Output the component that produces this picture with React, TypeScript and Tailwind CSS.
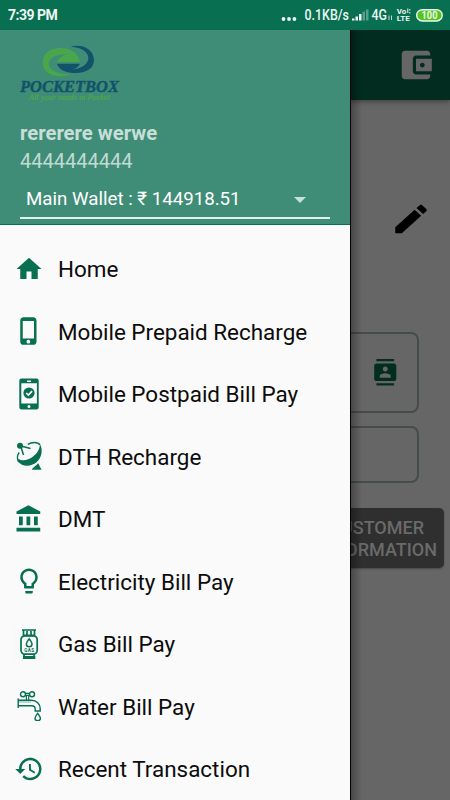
import React from "react";

const GREEN = "#086f50";

type IconProps = { d: string; className?: string; stretch?: boolean };

function Icon({ d, className = "size-[30px] shrink-0 fill-[#086f50]", stretch }: IconProps) {
  return (
    <svg viewBox="0 0 24 24" className={className} preserveAspectRatio={stretch ? "none" : undefined}>
      <path d={d} />
    </svg>
  );
}

const paths = {
  home: "M10 20v-6h4v6h5v-8h3L12 3 2 12h3v8z",
  phone:
    "M15.5 1h-8C6.12 1 5 2.12 5 3.5v17C5 21.88 6.12 23 7.5 23h8c1.38 0 2.5-1.12 2.5-2.5v-17C18 2.12 16.88 1 15.5 1zm-4 21c-.83 0-1.5-.67-1.5-1.5s.67-1.5 1.5-1.5 1.5.67 1.5 1.5-.67 1.5-1.5 1.5zm4.5-4H7V4h9v14z",
  bank: "M4 10v7h3v-7H4zm6 0v7h3v-7h-3zM2 22h19v-3H2v3zm14-12v7h3v-7h-3zm-4.5-9L2 6v2h19V6l-9.5-5z",
  bulb: "M9 21c0 .55.45 1 1 1h4c.55 0 1-.45 1-1v-1H9v1zm3-19C8.14 2 5 5.14 5 9c0 2.38 1.19 4.47 3 5.74V17c0 .55.45 1 1 1h6c.55 0 1-.45 1-1v-2.26c1.81-1.27 3-3.36 3-5.74 0-3.86-3.14-7-7-7zm2.85 11.1l-.85.6V16h-4v-2.3l-.85-.6A4.997 4.997 0 0 1 7 9c0-2.76 2.24-5 5-5s5 2.24 5 5c0 1.63-.8 3.16-2.15 4.1z",
  history:
    "M13 3c-4.97 0-9 4.03-9 9H1l3.89 3.89.07.14L9 12H6c0-3.87 3.13-7 7-7s7 3.13 7 7-3.13 7-7 7c-1.93 0-3.68-.79-4.94-2.06l-1.42 1.42C8.27 19.99 10.51 21 13 21c4.97 0 9-4.03 9-9s-4.03-9-9-9zm-1 5v5l4.28 2.54.72-1.21-3.5-2.08V8H12z",
  wallet:
    "M21 18v1c0 1.1-.9 2-2 2H5c-1.11 0-2-.9-2-2V5c0-1.1.89-2 2-2h14c1.1 0 2 .9 2 2v1h-9c-1.11 0-2 .9-2 2v8c0 1.1.89 2 2 2h9zm-9-2h10V8H12v8zm4-2.5c-.83 0-1.5-.67-1.5-1.5s.67-1.5 1.5-1.5 1.5.67 1.5 1.5-.67 1.5-1.5 1.5z",
  edit: "M3 17.25V21h3.75L17.81 9.94l-3.75-3.75L3 17.25zM20.71 7.04c.39-.39.39-1.02 0-1.41l-2.34-2.34c-.39-.39-1.02-.39-1.41 0l-1.83 1.83 3.75 3.75 1.83-1.83z",
  contacts:
    "M20 0H4v2h16V0zM4 24h16v-2H4v2zM20 4H4c-1.1 0-2 .9-2 2v12c0 1.1.9 2 2 2h16c1.1 0 2-.9 2-2V6c0-1.1-.9-2-2-2zm-8 2.75c1.24 0 2.25 1.01 2.25 2.25s-1.01 2.25-2.25 2.25S9.75 10.24 9.75 9 10.76 6.75 12 6.75zM17 17H7v-1.5c0-1.67 3.33-2.5 5-2.5s5 .83 5 2.5V17z",
};

function PostpaidIcon() {
  return (
    <svg viewBox="0 0 30 30" className="size-[30px] shrink-0 overflow-visible">
      <path
        fill={GREEN}
        fillRule="evenodd"
        d="M7.5 -.4h15a2.2 2.2 0 0 1 2.2 2.2v26.5a2.2 2.2 0 0 1-2.2 2.2h-15a2.2 2.2 0 0 1-2.2-2.2V1.8a2.2 2.2 0 0 1 2.2-2.2zM7.3 4.3v20.2h15.6V4.3zM13 1.4v1.5h4v-1.5zM15 26a1.500 1.500 0 1 0 0 3a1.500 1.500 0 1 0 0-3z"
      />
      <circle cx="15" cy="14" r="5.6" fill={GREEN} />
      <path d="M12.2 14l2.2 2.1 3.7-4" fill="none" stroke="#fafafa" strokeWidth="1.7" />
    </svg>
  );
}

function DishIcon() {
  return (
    <svg viewBox="0 0 30 30" className="size-[30px] shrink-0 bg-[#f6f9f8]">
      <g fill={GREEN}>
        <circle cx="6" cy="4.8" r="3" />
        <path d="M25.8 3C29.500 9 27.500 17 22.500 21.300C16.500 26.300 8 25.800 3.900 20.500L4.500 17.800C8 20.500 14 19.500 18.800 15.800C23.500 12 26 8 25.800 3z" />
        <path d="M17.800 28.800C19 26 21.500 25.500 24.200 22.200L27.500 28.800z" />
      </g>
      <g fill="none" stroke={GREEN} strokeWidth="1.5">
        <path d="M13.800 3.400C17.500 .9 23.500 .4 26 3.800M5.200 11.500C3.200 14 2.800 18 4.800 21" />
        <path d="M7 6L9.500 14M7 5l9.500 2.500" />
      </g>
    </svg>
  );
}

function GasIcon() {
  return (
    <svg viewBox="0 0 30 30" className="size-[30px] shrink-0 bg-[#f6f9f8]">
      <g fill="none" stroke={GREEN} strokeWidth="1.7">
        <path d="M8 1h14M9.5 1v5.5M20.5 1v5.5M13 2v4M17 2v4M9 6.3h12" />
        <rect x="7" y="6.8" width="16.2" height="18.4" rx="4" />
        <path d="M10 25v4M20 25v4" />
        <path d="M15.2 9.8c-1.5 2.2-2.8 3.5-2.8 5.2a2.8 2.8 0 0 0 5.6 0c0-1.7-1.3-3-2.8-5.2z" strokeWidth="1.5" />
      </g>
      <path d="M9 27h12.3v3H9z" fill={GREEN} />
      <text x="10.2" y="22.9" fontSize="4.6" fontWeight="700" fontFamily="Roboto, sans-serif" textLength="9.8" fill={GREEN}>
        GAS
      </text>
    </svg>
  );
}

function TapIcon() {
  return (
    <svg viewBox="0 0 30 30" className="size-[30px] shrink-0">
      <g fill="none" stroke={GREEN} strokeWidth="1.4">
        <circle cx="9" cy="3.3" r="2.5" />
        <circle cx="18" cy="3.3" r="2.5" />
        <path d="M11.3 2.3h4.400M11.3 4.300h4.400M12.400 4.300v4.600M14.700 4.300v4.600" strokeWidth="1.200" />
        <path d="M4.200 7.500v9.500M4.200 9.300h13.300c5 0 8.700 4 8.700 8.200v2.500h-5v-2c0-1.800-1.500-3.200-3.500-3.200H4.200" />
        <path d="M4.200 11h13" strokeWidth=".5" />
        <path d="M23.700 22.300c-1.600 2.300-2.700 3.500-2.700 5a2.700 2.400 0 0 0 5.400 0c0-1.500-1.200-2.800-2.700-5z" />
      </g>
    </svg>
  );
}

const menu: { label: string; icon: React.ReactNode }[] = [
  { label: "Home", icon: <Icon d={paths.home} /> },
  { label: "Mobile Prepaid Recharge", icon: <Icon d={paths.phone} /> },
  { label: "Mobile Postpaid Bill Pay", icon: <PostpaidIcon /> },
  { label: "DTH Recharge", icon: <DishIcon /> },
  { label: "DMT", icon: <Icon d={paths.bank} /> },
  { label: "Electricity Bill Pay", icon: <Icon d={paths.bulb} /> },
  { label: "Gas Bill Pay", icon: <GasIcon /> },
  { label: "Water Bill Pay", icon: <TapIcon /> },
  { label: "Recent Transaction", icon: <Icon d={paths.history} /> },
];

function Logo() {
  return (
    <svg viewBox="0 0 120 65" className="h-[65px] w-[120px]">
      <g transform="scale(.33333)">
        <path
          fill="#4aa64a"
          d="M210 66C206 40 182 24 152 24C118 24 98 42 98 68C98 94 124 112 158 108C168 107 174 105 180 102C150 104 118 94 116 72C116 52 140 42 172 42C158 46 147 54 140 66Z"
        />
        <path
          fill="#12536a"
          d="M141 71H210C206 80 198 85 186 89C216 86 236 72 235 52C233 34 212 22 182 20C222 10 252 32 252 60C252 84 230 99 198 99C168 99 146 89 141 71Z"
        />
      </g>
      <text x="10" y="52" fontFamily="'Liberation Serif', serif" fontStyle="italic" fontWeight="700" fontSize="16" textLength="99" lengthAdjust="spacingAndGlyphs" fill="#12536a" stroke="#12536a" strokeWidth=".4">
        POCKETBOX
      </text>
      <text x="19" y="60" fontFamily="'Liberation Serif', serif" fontStyle="italic" fontSize="8" textLength="81" lengthAdjust="spacingAndGlyphs" fill="#4caa4c" stroke="#4caa4c" strokeWidth=".15">
        All your needs in Pocket
      </text>
    </svg>
  );
}

function StatusBar() {
  return (
    <header className="flex h-[30px] items-center justify-between bg-[#086f51] pl-2 pr-[7px] text-[#eef7f3]">
      <span className="whitespace-nowrap text-[14px] font-bold leading-none tracking-[-0.5px]">7:39 PM</span>
      <svg viewBox="0 0 163 30" className="h-[30px] w-[163px]" fill="#eef7f3" fontFamily="Roboto, sans-serif">
        <circle cx="3.5" cy="19" r="1.9" />
        <circle cx="9" cy="19" r="1.9" />
        <circle cx="14.4" cy="19" r="1.9" />
        <text x="24.5" y="20" fontSize="14" fontWeight="500" textLength="44.5" lengthAdjust="spacingAndGlyphs">0.1KB/s</text>
        <path d="M72 18.5h2.5v2H72zM75.5 16.5h2.5v4h-2.5zM79 14h2.5v6.5H79z" />
        <path d="M82.5 11.5H85v9h-2.5zM86 9.5h2.5v11H86z" opacity=".35" />
        <text x="91.5" y="20" fontSize="14" fontWeight="500" textLength="15.5" lengthAdjust="spacingAndGlyphs">4G</text>
        <path d="M109 15.5v4.5M111.500 15.5v4.5" stroke="#cfe5dc" strokeWidth=".9" />
        <text x="116.8" y="13.5" fontSize="7" fontWeight="700" textLength="9.5" lengthAdjust="spacingAndGlyphs">Vo</text>
        <path d="M127.800 8.500v4.500M129.800 9v1.500M129.800 12v1.500" stroke="#eef7f3" strokeWidth="1" />
        <text x="116.8" y="21" fontSize="8" fontWeight="700" textLength="13" lengthAdjust="spacingAndGlyphs">LTE</text>
        <rect x="136.7" y="9.7" width="25.5" height="11.3" rx="5.6" fill="#54c51a" stroke="#eef7f3" strokeWidth="1.4" />
        <text x="141.5" y="19.3" fontSize="11" fontWeight="700" textLength="16" lengthAdjust="spacingAndGlyphs">100</text>
      </svg>
    </header>
  );
}

function Drawer() {
  return (
    <aside className="flex w-[350px] shrink-0 flex-col bg-[#fafafa]">
      <section className="h-[195px] shrink-0 border-b border-[#087052] bg-[#408d77] px-5 pt-2.5">
        <div className="-ml-2.5 h-[65px]">
          <Logo />
        </div>
        <h1 className="mt-3.5 h-[29px] whitespace-nowrap text-[20.3px] font-bold leading-7 text-[#c7dfd8]">rererere werwe</h1>
        <p className="h-[27px] text-[20px] leading-[27px] text-[#c0dbd3]">4444444444</p>
        <div className="mt-1.5 flex h-[38px] items-center border-b-2 border-[#e4f0ec] pl-1.5 pr-[24px] pt-px text-[18.7px] text-white">
          <span className="whitespace-nowrap">Main Wallet : ₹ 144918.51</span>
          <i className="ml-auto h-0 w-0 border-x-[6px] border-t-[6px] border-x-transparent border-t-[#c9e0d8]" />
        </div>
      </section>
      <nav className="pt-[12.5px]">
        {menu.map((m) => (
          <a key={m.label} className="flex h-[62.5px] items-center gap-3.5 pl-3.5 text-[22.45px] text-[#0c0c0c]">
            {m.icon}
            <span className="whitespace-nowrap pt-[3px]">{m.label}</span>
          </a>
        ))}
      </nav>
    </aside>
  );
}

function DimmedPage() {
  return (
    <main className="relative flex w-[100px] flex-col overflow-hidden bg-[#666]">
      <div className="flex h-[70px] shrink-0 items-start bg-[#022c20] pl-[47px] pt-4 shadow-[0_2px_5px_rgba(0,0,0,0.35)]">
        <Icon d={paths.wallet} className="size-[38px] shrink-0 fill-[#666]" />
      </div>
      <Icon d={paths.edit} stretch className="ml-[40px] mt-[100px] h-[38px] w-[42px] shrink-0 fill-black" />
      <div className="mr-[31px] mt-[94px] flex h-[81px] shrink-0 items-center justify-end rounded-r-lg border-y-2 border-r-2 border-[#454c4a] pr-[19px]">
        <Icon d={paths.contacts} className="size-[26.5px] shrink-0 fill-[#022e20]" />
      </div>
      <div className="mr-[31px] mt-[13px] h-[57px] shrink-0 rounded-r-lg border-y-2 border-r-2 border-[#454c4a]" />
      <div className="mr-1.5 mt-[25px] flex h-[60px] shrink-0 flex-col items-end justify-center rounded-r-[5px] bg-[#2f2f2f] pr-[7px] pt-0.5 text-[18px] font-medium leading-[22px] text-[#6a6a6a] shadow-[0_1px_2px_rgba(0,0,0,0.3)]">
        <span className="pr-[13px]">CUSTOMER</span>
        <span>INFORMATION</span>
      </div>
      <div className="absolute inset-y-0 left-0 w-3 border-l border-black bg-gradient-to-r from-black/30 to-transparent" />
    </main>
  );
}

export default function App() {
  return (
    <div className="flex h-[800px] w-[450px] flex-col overflow-hidden font-['Roboto','Noto_Sans',sans-serif]">
      <StatusBar />
      <div className="flex min-h-0 flex-1 overflow-hidden">
        <Drawer />
        <DimmedPage />
      </div>
    </div>
  );
}
